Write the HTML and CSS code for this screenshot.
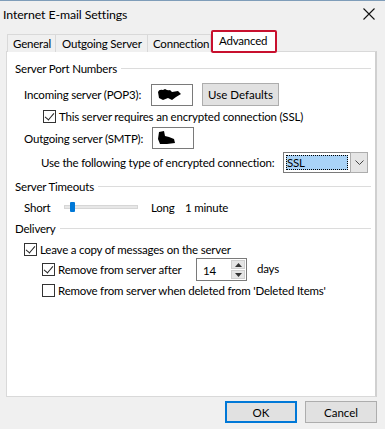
FILE: index.html
```html
<!DOCTYPE html>
<html>
<head>
<meta charset="utf-8">
<link rel="stylesheet" href="styles.css">
</head>
<body>
<div class="win">
  <div class="titlebar">
    <span class="title">Internet E-mail Settings</span>
    <svg class="close" width="12" height="12" viewBox="0 0 12 12"><path d="M0.5 0.5 L11.5 11.5 M11.5 0.5 L0.5 11.5" stroke="#111" stroke-width="1.1" fill="none"/></svg>
  </div>
  <div class="tabs">
    <div class="tab t-general">General</div>
    <div class="tab t-out">Outgoing Server</div>
    <div class="tab t-conn">Connection</div>
    <div class="tab tab-active">Advanced</div>
  </div>
  <div class="panel">
    <div class="heading h1"><span>Server Port Numbers</span><i></i></div>
    <div class="row r-in">
      <span class="lbl">Incoming server (POP3):</span>
      <div class="field f-in"><svg width="26" height="12" viewBox="0 0 26 12"><path d="M2 3 Q3 0 7 1 L9 0 Q12 2 14 1 L16 3 L22 2 L25 5 L20 8 L16 11 L12 9 L7 11 L3 9 Z" fill="#000"/></svg></div>
      <button class="btn b-def">Use Defaults</button>
    </div>
    <div class="row r-ssl">
      <span class="cb on"></span><span>This server requires an encrypted connection (SSL)</span>
    </div>
    <div class="row r-out">
      <span class="lbl">Outgoing server (SMTP):</span>
      <div class="field f-out"><svg width="20" height="14" viewBox="0 0 20 14"><path d="M2 1 L7 0 L8 5 L12 6 L17 8 L18 12 L10 13 L3 13 L1 8 Z" fill="#000"/></svg></div>
    </div>
    <div class="row r-enc">
      <span class="lbl2">Use the following type of encrypted connection:</span>
      <div class="select"><div class="sel-val"><span>SSL</span></div><div class="sel-btn"><svg width="9" height="5" viewBox="0 0 9 5"><path d="M0.5 0.5 L4.5 4.5 L8.5 0.5" stroke="#444" fill="none"/></svg></div></div>
    </div>
    <div class="heading h2"><span>Server Timeouts</span><i></i></div>
    <div class="row r-slide">
      <span class="short">Short</span>
      <div class="slider"><div class="track"></div><div class="thumb"></div></div>
      <span class="long">Long</span><span>1 minute</span>
    </div>
    <div class="heading h3"><span>Delivery</span><i></i></div>
    <div class="row r-leave">
      <span class="cb on"></span><span>Leave a copy of messages on the server</span>
    </div>
    <div class="row r-after">
      <span class="cb on"></span><span class="after-lbl">Remove from server after</span>
      <div class="spin"><span class="spin-val">14</span><div class="spin-btns"><div class="sb"><svg width="7" height="4" viewBox="0 0 7 4"><path d="M0 4 L3.5 0 L7 4 Z" fill="#333"/></svg></div><div class="sb"><svg width="7" height="4" viewBox="0 0 7 4"><path d="M0 0 L3.5 4 L7 0 Z" fill="#333"/></svg></div></div></div>
      <span class="days">days</span>
    </div>
    <div class="row r-del">
      <span class="cb"></span><span>Remove from server when deleted from 'Deleted Items'</span>
    </div>
  </div>
  <div class="footer">
    <button class="btn b-ok">OK</button>
    <button class="btn b-cancel">Cancel</button>
  </div>
</div>
</body>
</html>
```
FILE: styles.css
```css
* { box-sizing: border-box; }
html, body { margin: 0; padding: 0; }
body {
  background: #f0f0f0;
  font-family: Lato, "Liberation Sans", sans-serif;
  font-size: 11.5px;
  letter-spacing: -0.2px;
  color: #000;
  width: 385px;
  height: 429px;
  overflow: hidden;
  white-space: nowrap;
}
.win { border-top: 1px solid #7f9db9; height: 429px; }
.titlebar {
  height: 28px;
  display: flex;
  align-items: center;
  justify-content: space-between;
  padding: 0 10px 2px 3px;
}
.title { font-size: 12.3px; letter-spacing: -0.1px; }
.close { display: block; }
.tabs {
  display: flex;
  align-items: flex-end;
  padding-left: 7px;
  height: 23px;
  position: relative;
  z-index: 1;
}
.tab {
  height: 18px;
  border: 1px solid #d9d9d9;
  border-bottom: none;
  background: #f0f0f0;
  padding: 0 5px;
  line-height: 17px;
  margin-left: -1px;
}
.t-general { width: 49px; margin-left: 0; }
.t-out { width: 93px; padding-left: 6px; }
.t-conn { width: 64px; padding-left: 5px; }
.tab-active {
  height: 23px;
  width: 66px;
  background: #fff;
  border: 2px solid #c8102e;
  border-radius: 2px;
  line-height: 18px;
  padding: 0 4px 0 6px;
  margin-left: 0;
  margin-bottom: -1px;
}
.panel {
  margin: -1px 8px 0 6px;
  height: 346px;
  background: #fff;
  border: 1px solid #d9d9d9;
  border-right: 2px solid #d0d0d0;
  padding: 0 4px 0 8px;
}
.heading {
  display: flex;
  align-items: center;
  height: 16px;
}
.heading i {
  flex: 1;
  height: 1px;
  background: #dcdcdc;
  margin-left: 4px;
  margin-top: 1px;
}
.h1 { margin-top: 8px; }
.h2 { margin-top: 5px; }
.h3 { margin-top: 5px; }
.row { display: flex; align-items: center; }
.r-in { height: 23px; margin-top: 7px; padding-left: 9px; }
.r-in .lbl { width: 127px; }
.field {
  height: 22px;
  border: 1px solid #7a7a7a;
  background: #fff;
  display: flex;
  align-items: center;
  padding-left: 4px;
}
.f-in { width: 42px; }
.f-out { width: 42px; }
.btn {
  font: inherit;
  color: #000;
  background: #e1e1e1;
  border: 1px solid #adadad;
  padding: 0;
  border-radius: 0;
}
.b-def { width: 77px; height: 23px; margin-left: 9px; }
.r-ssl { height: 14px; margin-top: 3px; padding-left: 28px; }
.cb {
  width: 13px;
  height: 13px;
  border: 1px solid #333;
  background: #fff;
  margin-right: 3px;
  flex: none;
  position: relative;
}
.cb.on::after {
  content: "";
  position: absolute;
  left: 3px;
  top: 0px;
  width: 4px;
  height: 8px;
  border: solid #222;
  border-width: 0 1px 1px 0;
  transform: rotate(40deg);
}
.r-out { height: 22px; margin-top: 4px; padding-left: 9px; }
.r-out .lbl { width: 128px; }
.r-enc { height: 21px; margin-top: 3px; padding-left: 26px; }
.lbl2 { width: 242px; }
.select { display: flex; height: 21px; }
.sel-val {
  width: 67px;
  height: 21px;
  border: 1px solid #7a7a7a;
  border-right: none;
  padding: 2px;
  background: #fff;
}
.sel-val span {
  display: block;
  height: 100%;
  background: #a9d3f7;
  outline: 1px dotted #000;
  outline-offset: -1px;
  line-height: 15px;
  padding-left: 1px;
}
.sel-btn {
  width: 18px;
  height: 21px;
  border: 1px solid #adadad;
  background: #e5e5e5;
  display: flex;
  align-items: center;
  justify-content: center;
}
.r-slide { height: 16px; margin-top: 5px; padding-left: 9px; }
.short { width: 40px; }
.slider { position: relative; width: 74px; height: 12px; margin-right: 13px; }
.track {
  position: absolute;
  left: 0; right: 0; top: 4px;
  height: 4px;
  background: #e7e7e7;
  border: 1px solid #d6d6d6;
}
.thumb {
  position: absolute;
  left: 6px; top: 1px;
  width: 5px; height: 10px;
  background: #0078d7;
  border-radius: 1px;
}
.long { width: 34px; }
.r-leave { height: 14px; margin-top: 6px; padding-left: 9px; }
.r-after { height: 23px; margin-top: 2px; padding-left: 27px; }
.after-lbl { width: 138px; }
.spin {
  width: 51px;
  height: 23px;
  border: 1px solid #7a7a7a;
  background: #fff;
  display: flex;
  align-items: center;
  justify-content: space-between;
  padding-left: 6px;
}
.spin-val { padding-top: 2px; }
.spin-btns {
  width: 15px;
  height: 21px;
  display: flex;
  flex-direction: column;
  gap: 1px;
  padding: 1px 1px 1px 0;
}
.sb {
  flex: 1;
  background: #e5e5e5;
  border: 1px solid #cfcfcf;
  display: flex;
  align-items: center;
  justify-content: center;
}
.days { margin-left: 10px; margin-bottom: 3px; }
.r-del { height: 14px; margin-top: 2px; padding-left: 27px; }
.footer {
  display: flex;
  justify-content: flex-end;
  gap: 8px;
  padding: 4px 8px 0 0;
}
.b-ok, .b-cancel { width: 72px; height: 22px; }
.b-ok { border: 1px solid #0078d7; box-shadow: inset 0 0 0 1px #0078d7; }
```
